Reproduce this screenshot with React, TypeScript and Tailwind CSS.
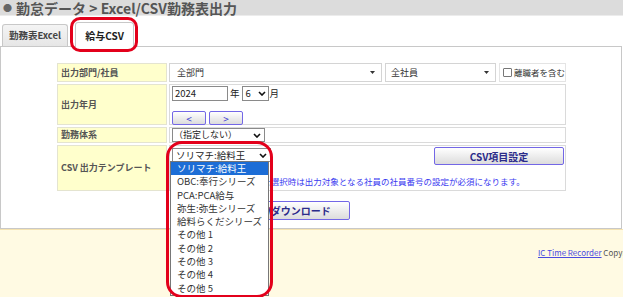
import React from "react";

const Chevron = () => (
  <svg width="8" height="5" viewBox="0 0 8 5" className="shrink-0">
    <polyline points="1,1 4,4 7,1" fill="none" stroke="#111" strokeWidth="1.6" />
  </svg>
);

const Tri = () => (
  <svg width="5" height="3" viewBox="0 0 5 3" className="shrink-0">
    <polygon points="0,0 5,0 2.5,3" fill="#333" />
  </svg>
);

const options = [
  "ソリマチ:給料王",
  "OBC:奉行シリーズ",
  "PCA:PCA給与",
  "弥生:弥生シリーズ",
  "給料らくだシリーズ",
  "その他 1",
  "その他 2",
  "その他 3",
  "その他 4",
  "その他 5",
];

function Label({ children, className = "" }: { children: React.ReactNode; className?: string }) {
  return (
    <div
      className={`bg-[#ffffcc] border border-[#e4e4d0] flex items-center pl-[3px] text-[9px] font-bold text-[#555] ${className}`}
    >
      {children}
    </div>
  );
}

function PurpleButton({ children, className = "" }: { children: React.ReactNode; className?: string }) {
  return (
    <div
      className={`border border-[#7367e6] rounded-[2px] bg-gradient-to-b from-white to-[#dcdcdc] flex items-center justify-center font-bold text-[#2b2b8a] ${className}`}
    >
      {children}
    </div>
  );
}

export default function App() {
  return (
    <div className="w-[623px] h-[297px] relative overflow-hidden bg-[#fffae3] font-['Noto_Sans_CJK_JP','Noto_Sans',sans-serif]">
      {/* Title bar */}
      <div className="h-[16px] bg-[#dcdcdc] border-b border-[#ececec] flex items-center pl-[3px] text-[14px] leading-[16px] font-bold text-[#555] whitespace-nowrap">
        <span className="text-[9px] mr-[4px] text-[#666]">●</span>
        勤怠データ &gt; Excel/CSV勤務表出力
      </div>

      <div className="bg-white h-[214px] border-b border-[#f5e3b0]">
        {/* Tabs */}
        <div className="flex items-end pl-[2px] pt-[6px] h-[30px] gap-[7px]">
          <div className="w-[66px] h-[22px] border border-b-0 border-[#c8c8c8] rounded-t-[3px] bg-gradient-to-b from-[#f4f4f4] to-[#e6e6e6] flex items-center justify-center text-[9.5px] font-bold text-[#444]">
            勤務表Excel
          </div>
          <div className="w-[59px] h-[25px] -mb-px relative z-10 border border-b-0 border-[#c8c8c8] rounded-t-[3px] bg-white flex items-center justify-center text-[10px] font-bold text-[#222]">
            給与CSV
          </div>
        </div>

        {/* Panel */}
        <div className="w-[622px] h-[183px] border border-[#c8c8c8] bg-white pt-[16px]">
          <div className="ml-[56px] w-[508px] grid grid-cols-[110px_1fr] gap-x-[2px] gap-y-[2px] grid-rows-[19px_41px_16px_46px]">
            {/* Row 1 */}
            <Label>出力部門/社員</Label>
            <div className="flex gap-[3px] text-[9px] text-[#333]">
              <div className="w-[213px] border border-[#d4d4d4] flex items-center justify-between pl-[7px] pr-[6px]">
                <span>全部門</span>
                <Tri />
              </div>
              <div className="w-[111px] border border-[#d4d4d4] flex items-center justify-between pl-[5px] pr-[6px]">
                <span>全社員</span>
                <Tri />
              </div>
              <div className="flex-1 border border-[#e4e4e4] flex items-center gap-[2px] pl-[3px] whitespace-nowrap overflow-hidden">
                <span className="w-[9px] h-[9px] border border-[#777] rounded-[1px] shrink-0" />
                <span className="text-[8.5px]">離職者を含む</span>
              </div>
            </div>

            {/* Row 2 */}
            <Label>出力年月</Label>
            <div className="border border-[#dadada] pl-[2px] pt-[1px] text-[9.5px] text-[#222]">
              <div className="flex items-center h-[15px]">
                <div className="w-[56px] h-[15px] border border-[#8a8a8a] flex items-center pl-[2px]">2024</div>
                <span className="mx-[2px]">年</span>
                <div className="w-[27px] h-[15px] border border-[#8a8a8a] flex items-center justify-between pl-[3px] pr-[2px]">
                  <span>6</span>
                  <Chevron />
                </div>
                <span className="ml-[1px]">月</span>
              </div>
              <div className="flex gap-[3px] mt-[10px]">
                <PurpleButton className="w-[34px] h-[14px] text-[10px] text-[#3a3ad0] font-normal">&lt;</PurpleButton>
                <PurpleButton className="w-[34px] h-[14px] text-[10px] text-[#3a3ad0] font-normal">&gt;</PurpleButton>
              </div>
            </div>

            {/* Row 3 */}
            <Label>勤務体系</Label>
            <div className="border border-[#dadada] pl-[2px] flex items-center text-[9px] text-[#222]">
              <div className="w-[93px] h-[14px] border border-[#8a8a8a] flex items-center justify-between pl-[1px] pr-[3px]">
                <span>（指定しない）</span>
                <Chevron />
              </div>
            </div>

            {/* Row 4 */}
            <Label>CSV 出力テンプレート</Label>
            <div className="border border-[#dadada] pl-[2px] pr-[1px] pt-[1px] text-[9px] text-[#222]">
              <div className="flex items-start justify-between">
                <div className="w-[99px] h-[14px] mt-[1px] border border-[#8a8a8a] flex items-center justify-between pl-[3px] pr-[3px] text-[9.5px]">
                  <span>ソリマチ:給料王</span>
                  <Chevron />
                </div>
                <PurpleButton className="w-[130px] h-[18px] text-[10px]">CSV項目設定</PurpleButton>
              </div>
              <div className="mt-[10px] ml-[14px] text-[8.5px] text-[#3a3af0] whitespace-nowrap">
                その他テンプレートを選択時は出力対象となる社員の社員番号の設定が必須になります。
              </div>
            </div>
          </div>

          <PurpleButton className="ml-[232px] mt-[10px] w-[117px] h-[19px] text-[10px]">CSVダウンロード</PurpleButton>
        </div>
      </div>

      {/* Footer */}
      <div className="pl-[538px] pt-[17px] text-[8px] whitespace-nowrap text-[#555]">
        <span className="text-[#4a4adf] underline">IC Time Recorder</span> Copyright
      </div>

      {/* Open dropdown list */}
      <div className="absolute left-[170px] top-[161px] w-[99px] border border-[#777] bg-white text-[9.5px] text-[#333] leading-[13.3px] z-20">
        {options.map((o, i) => (
          <div
            key={o}
            className={`pl-[6px] h-[13.3px] whitespace-nowrap ${i === 0 ? "bg-[#1c6dd6] text-white" : ""}`}
          >
            {o}
          </div>
        ))}
      </div>

      {/* Red annotations */}
      <div className="absolute left-[70px] top-[17px] w-[68px] h-[35px] border-[3px] border-[#e3001b] rounded-[10px] z-30" />
      <div className="absolute left-[166px] top-[141px] w-[107px] h-[157px] border-[3px] border-[#e3001b] rounded-[16px] z-30" />
    </div>
  );
}
